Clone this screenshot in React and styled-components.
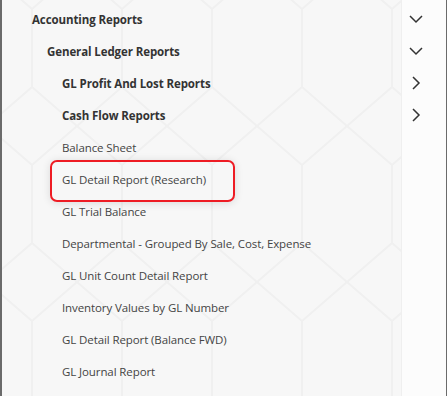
import React from "react";
import styled, { createGlobalStyle } from "styled-components";

const GlobalStyle = createGlobalStyle`
  html, body { margin: 0; padding: 0; background: #f7f7f7; }
  body { font-family: "Open Sans", "Noto Sans", sans-serif; }
`;

// faint honeycomb drawn behind the tree
const hex = encodeURIComponent(
  `<svg xmlns="http://www.w3.org/2000/svg" width="180" height="156" viewBox="0 0 180 156">
    <g fill="none" stroke="#f0f0f0" stroke-width="2">
      <path d="M0 39 L45 0 L90 39 L90 117 L45 156 L0 117 Z"/>
      <path d="M90 39 L135 0 L180 39 M135 0 L135 -40 M90 117 L135 156 L180 117 M180 39 L180 117"/>
    </g>
  </svg>`
);

const Panel = styled.div`
  box-sizing: border-box;
  width: 447px;
  height: 396px;
  border-left: 2px solid #6b6b6b;
  border-right: 1px solid #6b6b6b;
  padding-top: 3px;
  background:
    linear-gradient(to right, transparent calc(100% - 45px), #efefef calc(100% - 45px), #efefef calc(100% - 44px), #fcfcfc calc(100% - 44px)),
    url("data:image/svg+xml,${hex}") -60px -30px / 180px 156px repeat,
    #f7f7f7;
  overflow: hidden;
`;

const Row = styled.div`
  display: grid;
  grid-template-columns: 1fr 44px;
  height: 32px;
  align-items: center;
`;

const Label = styled.div`
  position: relative;
  padding-left: ${(p) => 30 + p.$level * 15}px;
  font-size: 11.5px;
  letter-spacing: -0.1px;
  font-weight: ${(p) => (p.$bold ? 700 : 400)};
  color: ${(p) => (p.$bold ? "#333" : "#444")};
  white-space: nowrap;
`;

const Highlight = styled.span`
  position: absolute;
  left: 48px;
  top: -12px;
  width: 185px;
  height: 42px;
  box-sizing: border-box;
  border: 2px solid #ee1c24;
  border-radius: 7px;
  box-shadow: 0 1px 8px rgba(0, 0, 0, 0.12);
  pointer-events: none;
`;

const Toggle = styled.div`
  display: flex;
  align-items: center;
  padding-left: 7px;
  color: #333;
`;

const Chevron = ({ down }) => (
  <svg width="14" height="14" viewBox="0 0 14 14">
    {down ? (
      <path d="M1 4 L7 10 L13 4" fill="none" stroke="currentColor" strokeWidth="1.5" />
    ) : (
      <path d="M4 1 L10 7 L4 13" fill="none" stroke="currentColor" strokeWidth="1.5" />
    )}
  </svg>
);

const items = [
  { text: "Accounting Reports", level: 0, bold: true, open: true },
  { text: "General Ledger Reports", level: 1, bold: true, open: true },
  { text: "GL Profit And Lost Reports", level: 2, bold: true, open: false },
  { text: "Cash Flow Reports", level: 2, bold: true, open: false },
  { text: "Balance Sheet", level: 2 },
  { text: "GL Detail Report (Research)", level: 2, marked: true },
  { text: "GL Trial Balance", level: 2 },
  { text: "Departmental - Grouped By Sale, Cost, Expense", level: 2 },
  { text: "GL Unit Count Detail Report", level: 2 },
  { text: "Inventory Values by GL Number", level: 2 },
  { text: "GL Detail Report (Balance FWD)", level: 2 },
  { text: "GL Journal Report", level: 2 },
];

export default function App() {
  return (
    <>
      <GlobalStyle />
      <Panel>
        {items.map((it) => (
          <Row key={it.text}>
            <Label $level={it.level} $bold={it.bold}>
              {it.text}
              {it.marked && <Highlight />}
            </Label>
            <Toggle>{it.open !== undefined && <Chevron down={it.open} />}</Toggle>
          </Row>
        ))}
      </Panel>
    </>
  );
}
